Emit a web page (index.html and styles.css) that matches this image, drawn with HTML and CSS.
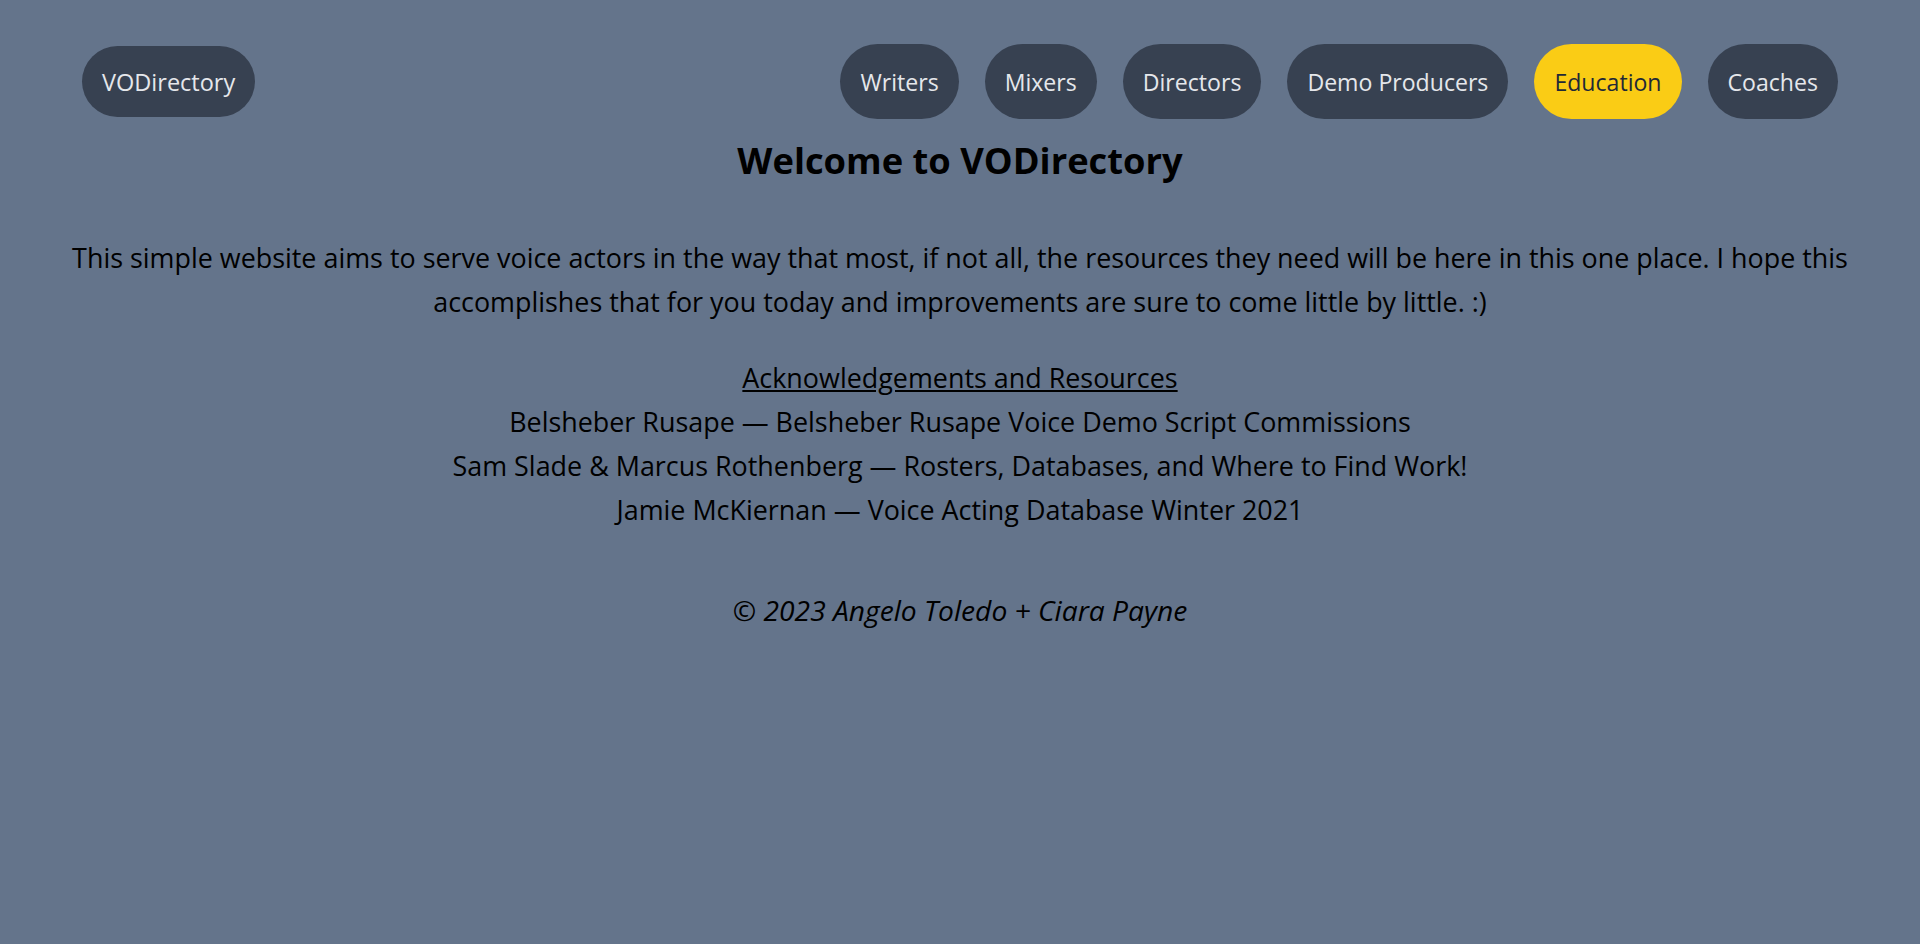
FILE: index.html
```html
<!DOCTYPE html>
<html lang="en">
<head>
<meta charset="utf-8">
<title>VODirectory</title>
<link rel="stylesheet" href="styles.css">
</head>
<body>
<header class="top">
  <a class="pill brand" href="#">VODirectory</a>
  <nav class="nav">
    <a class="pill" href="#">Writers</a>
    <a class="pill" href="#">Mixers</a>
    <a class="pill" href="#">Directors</a>
    <a class="pill" href="#">Demo Producers</a>
    <a class="pill active" href="#">Education</a>
    <a class="pill" href="#">Coaches</a>
  </nav>
</header>
<main class="content">
  <h1 class="title">Welcome to VODirectory</h1>
  <p class="intro">This simple website aims to serve voice actors in the way that most, if not all, the resources they need will be here in this one place. I hope this accomplishes that for you today and improvements are sure to come little by little. :)</p>
  <section class="ack">
    <a class="ack-head" href="#">Acknowledgements and Resources</a>
    <p class="ack-line">Belsheber Rusape — Belsheber Rusape Voice Demo Script Commissions</p>
    <p class="ack-line">Sam Slade &amp; Marcus Rothenberg — Rosters, Databases, and Where to Find Work!</p>
    <p class="ack-line">Jamie McKiernan — Voice Acting Database Winter 2021</p>
  </section>
  <footer class="foot">© 2023 Angelo Toledo + Ciara Payne</footer>
</main>
</body>
</html>
```
FILE: styles.css
```css
html, body {
  margin: 0;
  padding: 0;
}
body {
  background: #64748b;
  font-family: "Open Sans", "Noto Sans", sans-serif;
  color: #000;
  min-height: 944px;
}
.top {
  display: flex;
  justify-content: space-between;
  align-items: center;
  padding: 44px 82px 0;
}
.nav {
  display: flex;
  gap: 26px;
}
.pill {
  display: flex;
  align-items: center;
  height: 75px;
  padding: 0 20px;
  border-radius: 38px;
  background: #374151;
  color: #e5e7eb;
  font-size: 23.1px;
  text-decoration: none;
  box-sizing: border-box;
}
.brand {
  height: 71px;
  font-size: 23.5px;
}
.active {
  background: #facc15;
  color: #1f2937;
}
.content {
  text-align: center;
  padding: 0 56px;
}
.title {
  font-size: 36.3px;
  font-weight: 700;
  line-height: 48px;
  margin: 17px 0 0;
}
.intro {
  font-size: 26.9px;
  line-height: 44px;
  margin: 52px 0 0;
}
.ack {
  margin-top: 32px;
  font-size: 26.9px;
  line-height: 44px;
}
.ack-head {
  color: #000;
  text-decoration: underline;
}
.ack-line {
  margin: 0;
}
.foot {
  font-size: 28.2px;
  line-height: 44px;
  font-style: italic;
  margin-top: 56px;
}
```
